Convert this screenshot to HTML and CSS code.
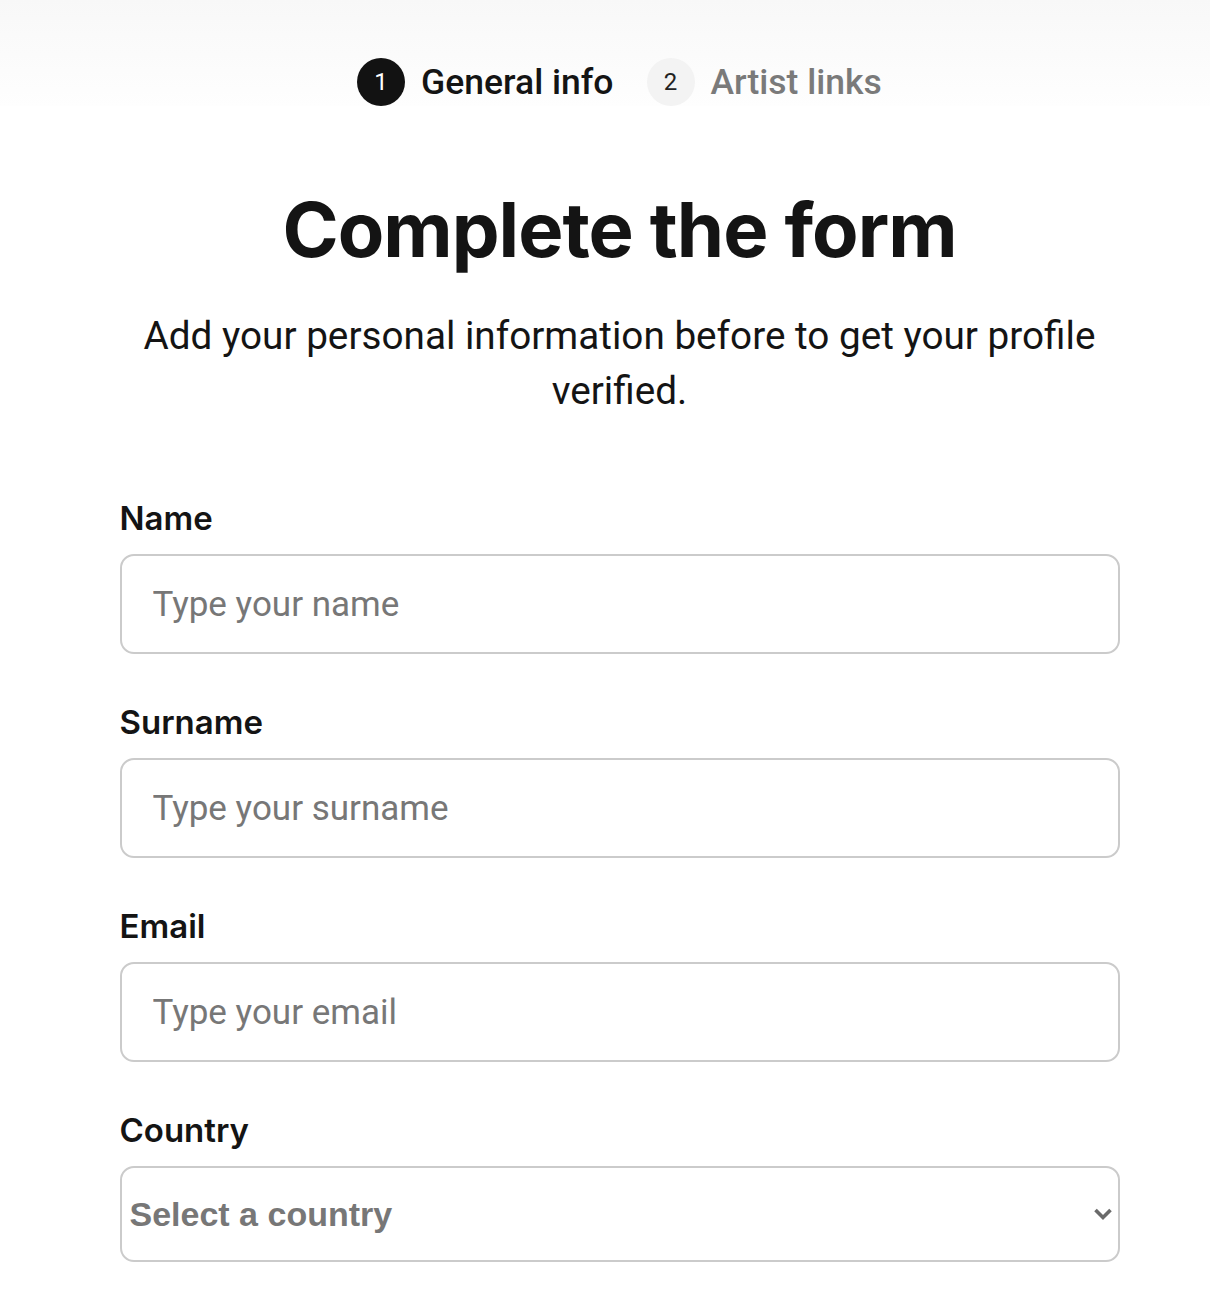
FILE: index.html
```html
<!DOCTYPE html>
<html lang="en">
<head>
    <meta charset="UTF-8">
    <meta name="viewport" content="width=device-width, initial-scale=1.0">
    <title>Complete the form</title>
    <link rel="stylesheet" href="styles.css">
</head>
<body>
    <div class="top">
        <div class="steps">
            <div class="step active">
                <span class="step-num">1</span>
                <span class="step-label">General info</span>
            </div>
            <div class="step">
                <span class="step-num">2</span>
                <span class="step-label">Artist links</span>
            </div>
        </div>
    </div>

    <main class="content">
        <h1 class="title">Complete the form</h1>
        <p class="subtitle">Add your personal information before to get your profile verified.</p>

        <form class="form">
            <div class="field">
                <label for="name">Name</label>
                <input type="text" id="name" placeholder="Type your name">
            </div>
            <div class="field">
                <label for="surname">Surname</label>
                <input type="text" id="surname" placeholder="Type your surname">
            </div>
            <div class="field">
                <label for="email">Email</label>
                <input type="email" id="email" placeholder="Type your email">
            </div>
            <div class="field">
                <label for="country">Country</label>
                <div class="select-wrap">
                    <select id="country">
                        <option>Select a country</option>
                    </select>
                    <svg class="chevron" viewBox="0 0 20 14" width="20" height="14">
                        <path d="M2.5 3l7.5 7.5 7.5-7.5" fill="none" stroke="#6a6a6a" stroke-width="3.6"></path>
                    </svg>
                </div>
            </div>
        </form>
    </main>
</body>
</html>
```

FILE: styles.css
```css
body, html {
    margin: 0;
    padding: 0;
    background: #fff;
    font-family: Roboto, 'Liberation Sans', sans-serif;
    color: #141414;
}
body {
    padding-left: 29px;
}
.top {
    background: linear-gradient(180deg, #f8f8f8 0%, #fff 125px);
    margin-left: -29px;
    padding-left: 29px;
    padding-top: 58px;
}
.steps {
    display: flex;
    justify-content: center;
    align-items: center;
    gap: 33px;
}
.step {
    display: flex;
    align-items: center;
    gap: 16px;
}
.step-num {
    width: 48px;
    height: 48px;
    border-radius: 50%;
    display: flex;
    align-items: center;
    justify-content: center;
    background: #f3f3f3;
    color: #222;
    font-size: 24px;
}
.step-label {
    font-size: 35.5px;
    font-weight: 500;
    color: #7a7a7a;
}
.step.active .step-num {
    background: #121212;
    color: #fff;
}
.step.active .step-label {
    color: #141414;
}
.content {
    width: 1000px;
    margin: 0 auto;
    padding-bottom: 30px;
}
.title {
    margin: 78px 0 0;
    text-align: center;
    font-family: Inter, sans-serif;
    font-weight: 700;
    font-size: 76px;
    line-height: 90px;
    letter-spacing: -1px;
}
.subtitle {
    margin: 34px -10px 0;
    text-align: center;
    font-size: 38.7px;
    line-height: 55px;
}
.form {
    margin-top: 80px;
    display: flex;
    flex-direction: column;
    gap: 48px;
}
.field label {
    display: block;
    font-family: Inter, sans-serif;
    font-weight: 600;
    font-size: 33px;
    line-height: 40px;
    margin-bottom: 16px;
}
.field input, .field select {
    box-sizing: border-box;
    width: 100%;
    height: 100px;
    border: 2px solid #cbcbcb;
    border-radius: 14px;
    background: #fff;
    outline: none;
}
.field input {
    padding: 0 31px;
    font-family: Roboto, sans-serif;
    font-size: 35px;
    color: #141414;
}
.field input::placeholder {
    color: #777;
}
.select-wrap {
    position: relative;
}
.field select {
    height: 96px;
    appearance: none;
    -webkit-appearance: none;
    padding: 0 8px;
    font-family: 'Liberation Sans', sans-serif;
    font-weight: 700;
    font-size: 34px;
    color: #777;
}
.chevron {
    position: absolute;
    right: 7px;
    top: 41px;
}
```
